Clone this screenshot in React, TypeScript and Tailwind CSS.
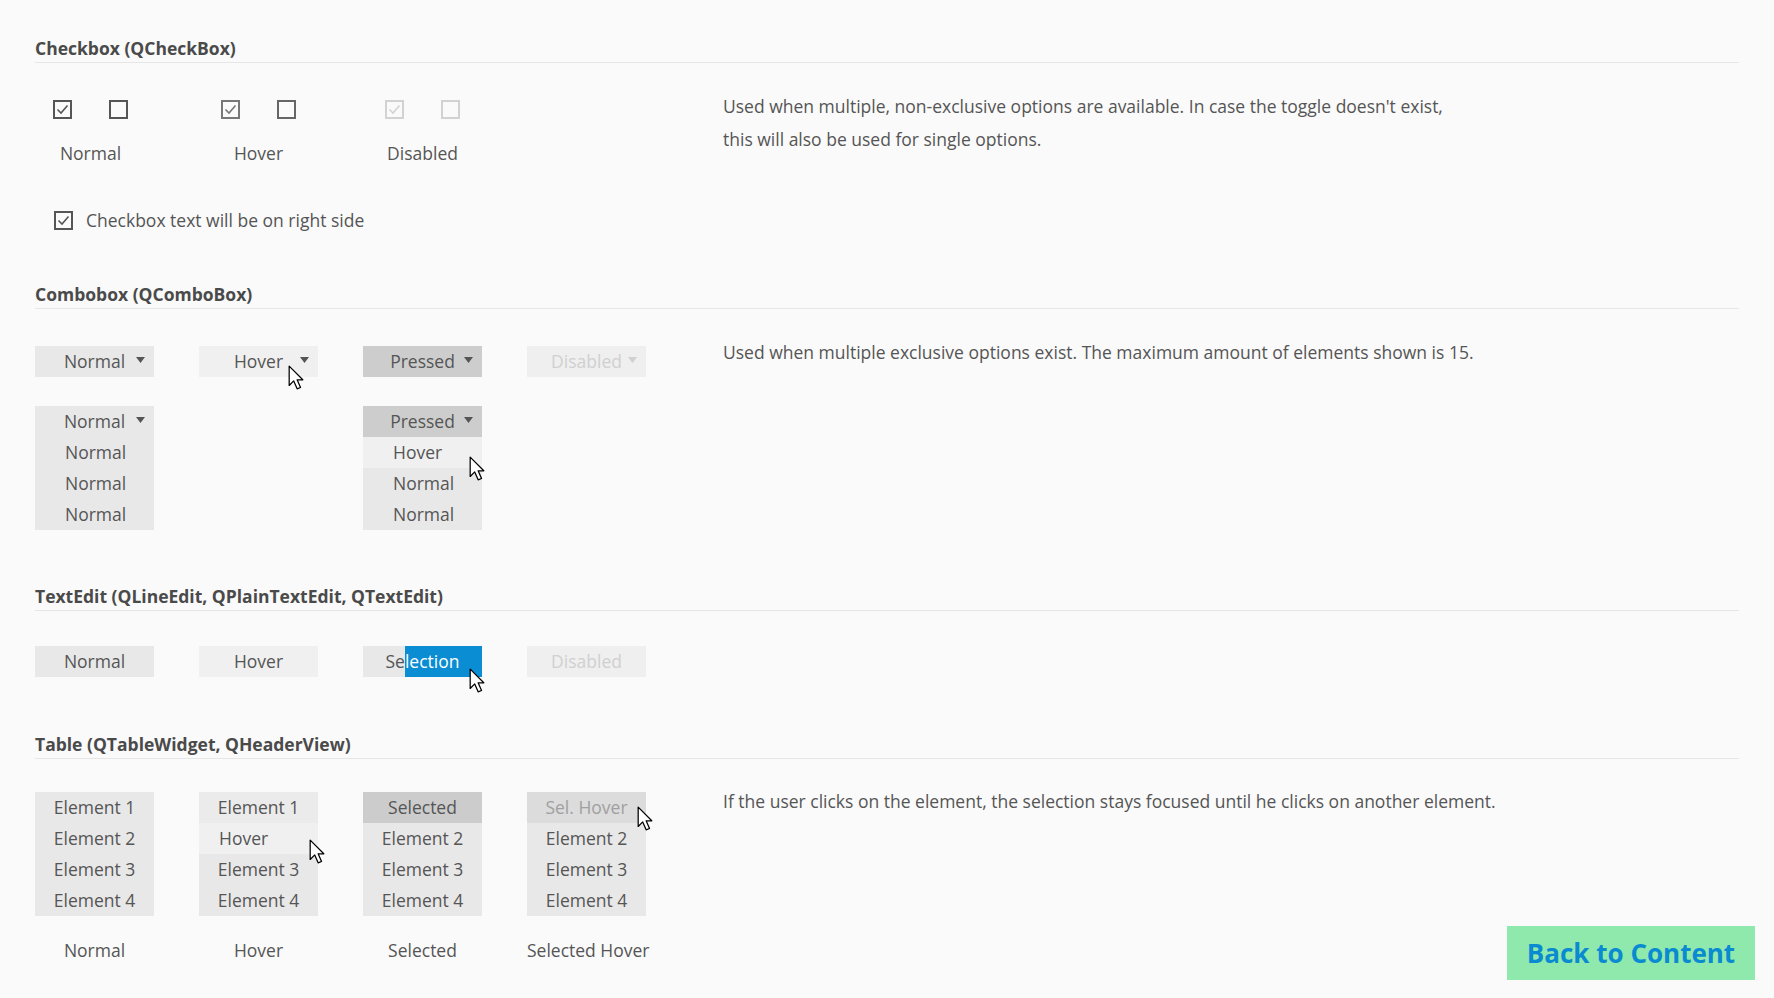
import type { ReactNode } from 'react';

const cell = 'w-[119px] h-[31px]';

function Check({ checked, tone }: { checked?: boolean; tone: string }) {
  return (
    <svg width="19" height="19" viewBox="0 0 19 19" className="shrink-0">
      <rect x="1" y="1" width="17" height="17" fill="none" stroke={tone} strokeWidth="2" />
      {checked && <polyline points="4.5,9.5 8,13 14.5,5.5" fill="none" stroke={tone} strokeWidth="1.6" />}
    </svg>
  );
}

function Arrow({ tone = '#555' }: { tone?: string }) {
  return (
    <svg width="9" height="6" viewBox="0 0 9 6" className="absolute right-[9px] top-[11px]">
      <polygon points="0,0 9,0 4.5,6" fill={tone} />
    </svg>
  );
}

function Cursor({ x, y }: { x: number; y: number }) {
  return (
    <svg
      width="16"
      height="25"
      viewBox="0 0 14 22"
      className="absolute z-10"
      style={{ left: x - 1, top: y - 1 }}
    >
      <path d="M1 1 V18 L5 14 L8 21 L11 19.8 L8 13 H13 Z" fill="white" stroke="black" strokeWidth="1.1" strokeLinejoin="round" />
    </svg>
  );
}

function Heading({ children }: { children: ReactNode }) {
  return (
    <div className="h-[29px] leading-[29px] border-b border-[#e6e6e6] text-[17.5px] font-bold text-[#4a4a4a]">
      {children}
    </div>
  );
}

function Desc({ children, className = '' }: { children: ReactNode; className?: string }) {
  return <div className={`text-[17.5px] leading-[33px] text-[#555] ${className}`}>{children}</div>;
}

function Grid({ children }: { children: ReactNode }) {
  return <div className="grid grid-cols-[119px_119px_119px_119px] gap-x-[45px]">{children}</div>;
}

function Combo({ label, bg, text = 'text-[#555]', arrow }: { label: string; bg: string; text?: string; arrow?: string }) {
  return (
    <div className={`${cell} ${bg} ${text} relative flex items-center justify-center`}>
      {label}
      <Arrow tone={arrow} />
    </div>
  );
}

function Table({ rows }: { rows: { label: string; cls: string }[] }) {
  return (
    <div className="flex flex-col">
      {rows.map((r, i) => (
        <div key={i} className={`${cell} flex items-center ${r.cls}`}>
          {r.label}
        </div>
      ))}
    </div>
  );
}

const norm = 'bg-[#e8e8e8] text-[#555] justify-center';

export default function App() {
  return (
    <div
      className="relative h-[998px] overflow-hidden bg-[#fafafa] px-[35px] pt-[34px] text-[17.5px] text-[#555]"
      style={{ fontFamily: '"Open Sans", "Noto Sans", sans-serif' }}
    >
      {/* Checkbox */}
      <Heading>Checkbox (QCheckBox)</Heading>
      <div className="mt-[37px] flex">
        <div className="w-[688px] shrink-0">
          <Grid>
            <div className="flex justify-center gap-[37px] pr-[8px]">
              <Check checked tone="#555" />
              <Check tone="#555" />
            </div>
            <div className="flex justify-center gap-[37px]">
              <Check checked tone="#777" />
              <Check tone="#666" />
            </div>
            <div className="flex justify-center gap-[37px]">
              <Check checked tone="#d2d2d2" />
              <Check tone="#d2d2d2" />
            </div>
          </Grid>
          <div className="mt-[22px]">
            <Grid>
              <div className="h-[24px] leading-[24px] text-center pr-[8px]">Normal</div>
              <div className="h-[24px] leading-[24px] text-center">Hover</div>
              <div className="h-[24px] leading-[24px] text-center">Disabled</div>
            </Grid>
          </div>
          <div className="mt-[43px] flex h-[24px] items-center gap-[13px] pl-[19px]">
            <Check checked tone="#555" />
            <span className="leading-[24px]">Checkbox text will be on right side</span>
          </div>
        </div>
        <Desc className="-mt-[10px]">
          Used when multiple, non-exclusive options are available. In case the toggle doesn't exist,
          <br />
          this will also be used for single options.
        </Desc>
      </div>

      {/* Combobox */}
      <div className="mt-[48px]">
        <Heading>Combobox (QComboBox)</Heading>
      </div>
      <div className="mt-[37px] flex">
        <div className="w-[688px] shrink-0">
          <Grid>
            <Combo label="Normal" bg="bg-[#e8e8e8]" />
            <Combo label="Hover" bg="bg-[#f0f0f0]" />
            <Combo label="Pressed" bg="bg-[#cdcdcd]" />
            <Combo label="Disabled" bg="bg-[#efefef]" text="text-[#d0d0d0]" arrow="#d0d0d0" />
          </Grid>
          <div className="mt-[29px]">
            <Grid>
              <div className="flex flex-col bg-[#e8e8e8]">
                <div className={`${cell} relative flex items-center justify-center`}>
                  Normal
                  <Arrow />
                </div>
                <div className={`${cell} flex items-center pl-[30px]`}>Normal</div>
                <div className={`${cell} flex items-center pl-[30px]`}>Normal</div>
                <div className={`${cell} flex items-center pl-[30px]`}>Normal</div>
              </div>
              <div />
              <div className="flex flex-col bg-[#e8e8e8]">
                <div className={`${cell} relative flex items-center justify-center bg-[#cdcdcd]`}>
                  Pressed
                  <Arrow />
                </div>
                <div className={`${cell} flex items-center pl-[30px] bg-[#f0f0f0]`}>Hover</div>
                <div className={`${cell} flex items-center pl-[30px]`}>Normal</div>
                <div className={`${cell} flex items-center pl-[30px]`}>Normal</div>
              </div>
            </Grid>
          </div>
        </div>
        <Desc className="-mt-[10px]">
          Used when multiple exclusive options exist. The maximum amount of elements shown is 15.
        </Desc>
      </div>

      {/* TextEdit */}
      <div className="mt-[52px]">
        <Heading>TextEdit (QLineEdit, QPlainTextEdit, QTextEdit)</Heading>
      </div>
      <div className="mt-[35px] w-[688px]">
        <Grid>
          <div className={`${cell} flex items-center justify-center bg-[#e8e8e8]`}>Normal</div>
          <div className={`${cell} flex items-center justify-center bg-[#f0f0f0]`}>Hover</div>
          <div className={`${cell} flex justify-center overflow-hidden bg-[#e8e8e8]`}>
            <span className="flex items-center">Se</span>
            <span className="flex items-center bg-[#0a8dd3] pr-[60px] -mr-[60px] text-white">lection</span>
          </div>
          <div className={`${cell} flex items-center justify-center bg-[#efefef] text-[#d0d0d0]`}>Disabled</div>
        </Grid>
      </div>

      {/* Table */}
      <div className="mt-[53px]">
        <Heading>Table (QTableWidget, QHeaderView)</Heading>
      </div>
      <div className="mt-[33px] flex">
        <div className="w-[688px] shrink-0">
          <Grid>
            <Table
              rows={[
                { label: 'Element 1', cls: norm },
                { label: 'Element 2', cls: norm },
                { label: 'Element 3', cls: norm },
                { label: 'Element 4', cls: norm },
              ]}
            />
            <Table
              rows={[
                { label: 'Element 1', cls: 'bg-[#ebebeb] justify-center' },
                { label: 'Hover', cls: 'bg-[#f0f0f0] pl-[20px]' },
                { label: 'Element 3', cls: norm },
                { label: 'Element 4', cls: norm },
              ]}
            />
            <Table
              rows={[
                { label: 'Selected', cls: 'bg-[#cccccc] justify-center' },
                { label: 'Element 2', cls: norm },
                { label: 'Element 3', cls: norm },
                { label: 'Element 4', cls: norm },
              ]}
            />
            <Table
              rows={[
                { label: 'Sel. Hover', cls: 'bg-[#dcdcdc] text-[#a0a0a0] justify-center' },
                { label: 'Element 2', cls: norm },
                { label: 'Element 3', cls: norm },
                { label: 'Element 4', cls: norm },
              ]}
            />
          </Grid>
          <div className="mt-[22px]">
            <Grid>
              <div className="h-[24px] leading-[24px] text-center">Normal</div>
              <div className="h-[24px] leading-[24px] text-center">Hover</div>
              <div className="h-[24px] leading-[24px] text-center">Selected</div>
              <div className="h-[24px] leading-[24px] text-center whitespace-nowrap">Selected Hover</div>
            </Grid>
          </div>
        </div>
        <Desc className="-mt-[7px]">
          If the user clicks on the element, the selection stays focused until he clicks on another element.
        </Desc>
      </div>

      <button className="absolute right-[19px] bottom-[18px] flex h-[54px] w-[248px] items-center justify-center bg-[#8fe9ad] text-[26px] font-bold text-[#0a8ad0]">
        Back to Content
      </button>

      <Cursor x={289} y={366} />
      <Cursor x={470} y={457} />
      <Cursor x={470} y={669} />
      <Cursor x={310} y={840} />
      <Cursor x={638} y={807} />
    </div>
  );
}
